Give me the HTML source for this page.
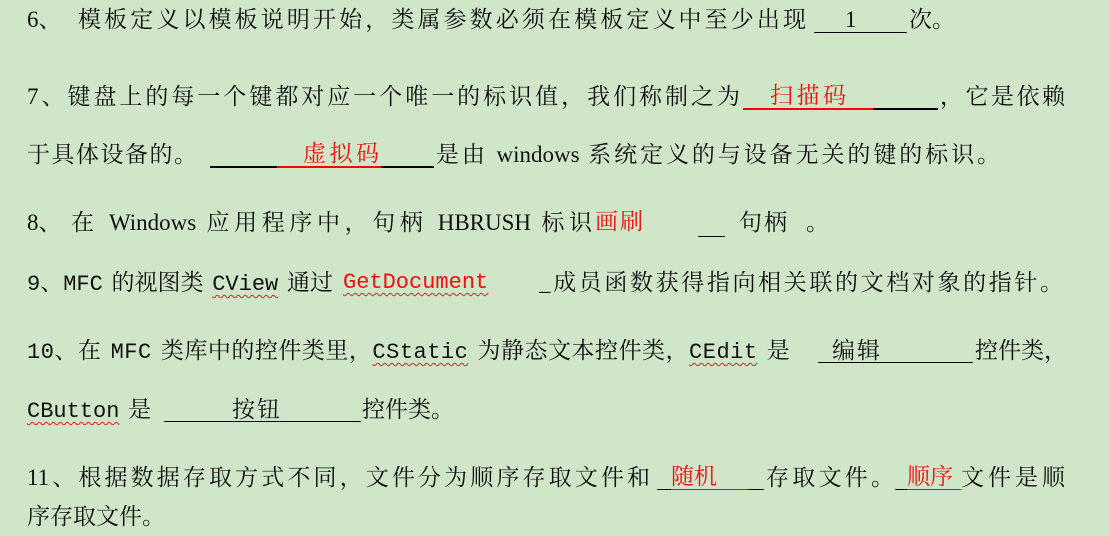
<!DOCTYPE html>
<html><head><meta charset="utf-8"><style>
html,body{margin:0;padding:0}
body{width:1110px;height:536px;background:#cfe6c9;position:relative;overflow:hidden;font-family:"Liberation Serif","Noto Serif CJK SC","Noto Sans CJK SC",serif;font-size:23px;color:#111}
.s{position:absolute;white-space:nowrap;line-height:30px;height:30px}
.j{text-align:justify;text-align-last:justify}
.r{color:#f01010}
.m{font-family:"Liberation Mono","Noto Sans CJK SC",monospace;font-size:22px;word-spacing:-4.5px}
.m .c{font-family:"Liberation Serif","Noto Serif CJK SC",serif;font-size:23px}
.u{position:absolute;height:2px;background:#000}
.ur{position:absolute;height:2px;background:#f00}
.w{text-decoration:underline wavy #e02020;text-decoration-thickness:1px;text-underline-offset:4px}
</style></head><body>
<div class="s" style="left:27px;top:5px">6、</div>
<div class="s j" style="left:78px;top:5px;width:728px">模板定义以模板说明开始，类属参数必须在模板定义中至少出现</div>
<div class="u" style="left:814px;top:32px;width:93px;height:1px"></div>
<div class="s" style="left:845px;top:5px">1</div>
<div class="s j" style="left:909px;top:5px;width:40px">次。</div>

<div class="s j" style="left:27px;top:82px;width:713px">7、键盘上的每一个键都对应一个唯一的标识值，我们称制之为</div>
<div class="ur" style="left:743px;top:108px;width:130px"></div>
<div class="u" style="left:873px;top:108px;width:65px"></div>
<div class="s j r" style="left:770px;top:81px;width:76px">扫描码</div>
<div class="s j" style="left:940px;top:82px;width:125px">，它是依赖</div>
<div class="s j" style="left:27px;top:140px;width:170px">于具体设备的。</div>
<div class="u" style="left:210px;top:166px;width:67px"></div>
<div class="ur" style="left:277px;top:166px;width:104px"></div>
<div class="u" style="left:381px;top:166px;width:53px"></div>
<div class="s j r" style="left:303px;top:139px;width:76px">虚拟码</div>
<div class="s j" style="left:436px;top:140px;width:564px">是由 windows 系统定义的与设备无关的键的标识。</div>

<div class="s" style="left:27px;top:208px">8、</div>
<div class="s j" style="left:71px;top:208px;width:521px">在 Windows 应用程序中，句柄 HBRUSH 标识</div>
<div class="s j r" style="left:595px;top:207px;width:48px">画刷</div>
<div class="u" style="left:698px;top:236px;width:27px;height:1px"></div>
<div class="s j" style="left:739px;top:208px;width:48px">句柄</div>
<div class="s" style="left:806px;top:208px">。</div>

<div class="s m" style="left:27px;top:268px">9<span class="c">、</span>MFC <span class="c">的视图类</span> <span class="w">CView</span> <span class="c">通过</span></div>
<div class="s m r" style="left:343px;top:268px"><span class="w">GetDocument</span></div>
<div class="s j" style="left:539px;top:268px;width:524px">_成员函数获得指向相关联的文档对象的指针。</div>

<div class="s m" style="left:27px;top:336px;letter-spacing:0.5px">10<span class="c">、在</span> MFC <span class="c">类库中的控件类里，</span><span class="w">CStatic</span> <span class="c">为静态文本控件类，</span><span class="w">CEdit</span> <span class="c">是</span></div>
<div class="u" style="left:818px;top:362px;width:155px;height:1px"></div>
<div class="s j" style="left:832px;top:336px;width:48px">编辑</div>
<div class="s j" style="left:975px;top:336px;width:90px">控件类，</div>
<div class="s m" style="left:27px;top:395px"><span class="w">CButton</span> <span class="c">是</span></div>
<div class="u" style="left:164px;top:421px;width:197px;height:1px"></div>
<div class="s j" style="left:232px;top:395px;width:48px">按钮</div>
<div class="s j" style="left:362px;top:395px;width:92px">控件类。</div>

<div class="s j" style="left:27px;top:463px;width:623px">11、根据数据存取方式不同，文件分为顺序存取文件和</div>
<div class="u" style="left:657px;top:489px;width:107px;height:1px"></div>
<div class="ur" style="left:671px;top:489px;width:77px;height:1px"></div>
<div class="s r" style="left:671px;top:462px">随机</div>
<div class="s j" style="left:766px;top:463px;width:128px">存取文件。</div>
<div class="u" style="left:895px;top:489px;width:12px;height:1px"></div>
<div class="ur" style="left:907px;top:489px;width:54px;height:1px"></div>
<div class="s r" style="left:907px;top:462px">顺序</div>
<div class="s j" style="left:961px;top:463px;width:104px">文件是顺</div>
<div class="s" style="left:27px;top:502px">序存取文件。</div>
</body></html>
